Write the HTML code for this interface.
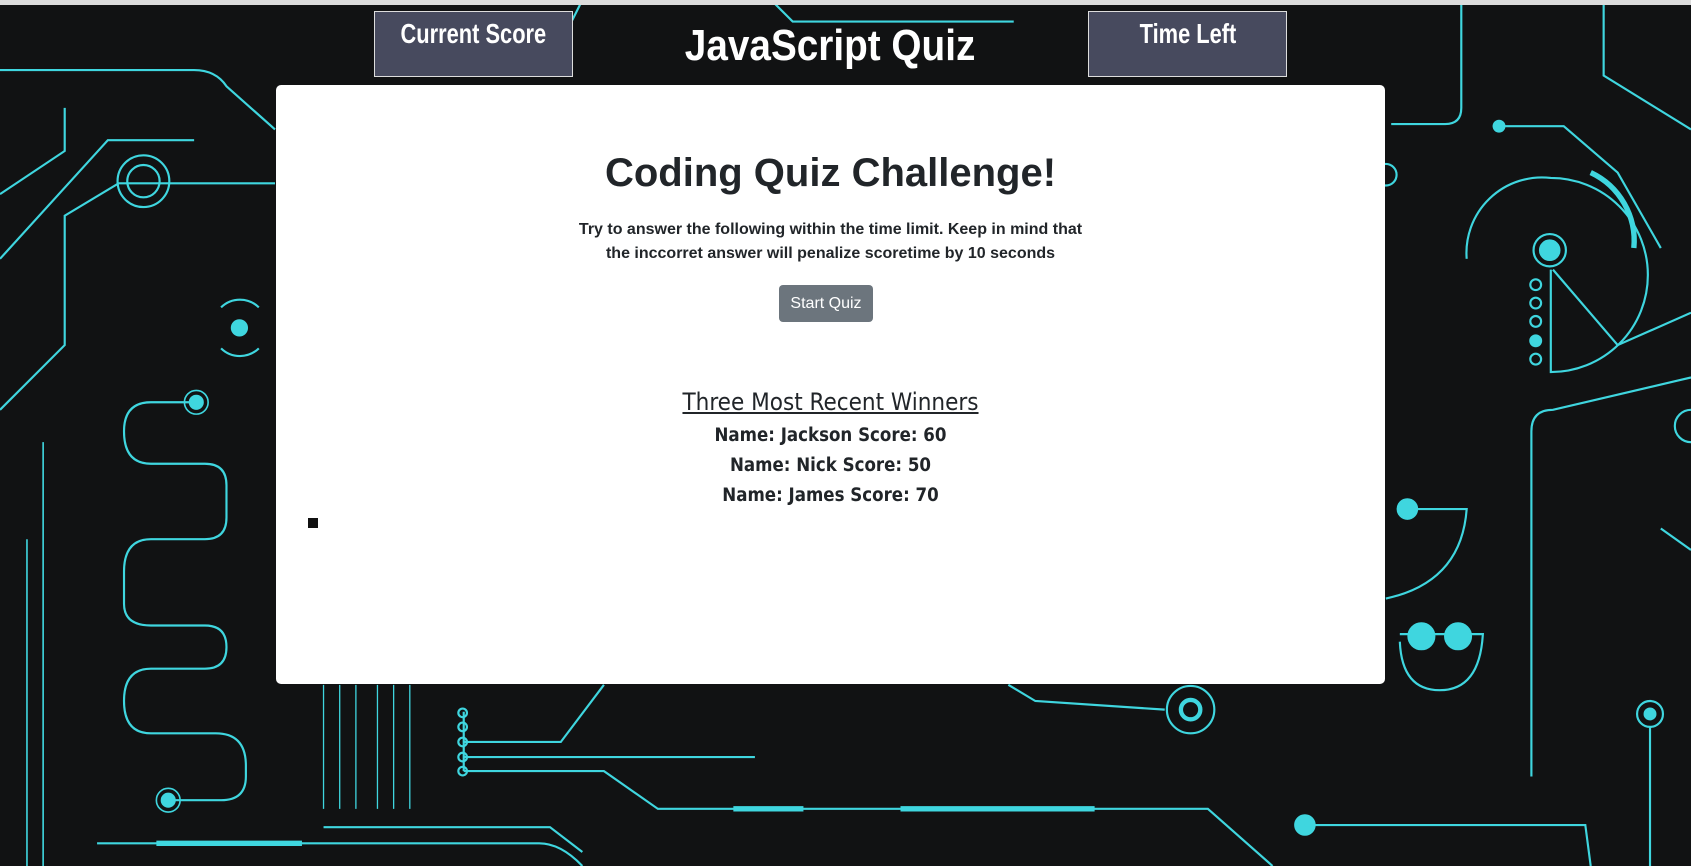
<!DOCTYPE html>
<html><head><meta charset="utf-8"><style>
html,body{margin:0;padding:0;width:1691px;height:866px;overflow:hidden;background:#111213;font-family:"Liberation Sans",Arial,sans-serif}
#bg{position:absolute;left:0;top:0}
.top{position:absolute;left:0;top:0;width:1691px;height:5px;background:#dcdcdc}
.box{position:absolute;top:11px;width:197px;height:64px;background:#474a5e;border:1px solid #ddd;color:#fff;font-weight:bold;font-size:28px;text-align:center;line-height:44px}
.box span,.title span{display:inline-block;transform:scaleX(.78)}
.title span{transform:scaleX(.88)}
.title{position:absolute;left:580px;width:500px;top:21px;text-align:center;color:#fff;font-weight:bold;font-size:44px;line-height:50px}
.card{position:absolute;left:276px;top:85px;width:1109px;height:599px;background:#fff;border-radius:5px;text-align:center;color:#212529}
h1{margin:0;position:absolute;left:0;right:0;font-size:40px;line-height:50px}
.p{position:absolute;top:133px;left:0;right:0;font-size:16px;font-weight:bold;line-height:24px}
.btn{position:absolute;left:503px;top:200px;width:94px;height:37px;background:#6c757d;color:#fff;border-radius:4px;font-size:16px;line-height:37px}
.h3{position:absolute;top:302px;left:0;right:0;font-size:24px;text-decoration:underline;line-height:30px;font-family:"DejaVu Sans Condensed","Liberation Sans",sans-serif}
.n{position:absolute;left:0;right:0;font-size:18.5px;font-weight:bold;line-height:26px;font-family:"DejaVu Sans Condensed","Liberation Sans",sans-serif}
.ico{position:absolute;left:32px;top:433px;width:10px;height:10px;background:#111}
</style></head><body>
<svg id="bg" width="1691" height="866" viewBox="0 0 1568 803" preserveAspectRatio="none" fill="none" stroke="#3fd6df" stroke-width="2">
<path d="M0 65 L180 65 Q200 65 210 80 L255 120"/>
<path d="M0 180 L60 140 L60 100"/>
<path d="M540 0 L520 40"/>
<path d="M715 0 L735 20 L940 20"/>
<path d="M1355 0 L1355 100 Q1355 115 1340 115 L1290 115"/>
<path d="M1487 0 L1487 70 L1568 120"/>
<path d="M1440 250 L1500 320 L1568 290"/>
<path d="M1420 720 L1420 400 Q1420 380 1440 380 L1568 350"/>
<path d="M0 380 L60 320 L60 200 L110 170 L255 170"/>
<path d="M0 240 L100 130 L180 130"/>
<path d="M40 410 L40 803" stroke-width="1.5"/>
<path d="M25 500 L25 803" stroke-width="1.5"/>
<path d="M180 373 L140 373 Q115 373 115 400 Q115 430 140 430 L190 430 Q210 430 210 450 L210 480 Q210 500 190 500 L140 500 Q115 500 115 530 L115 560 Q115 580 140 580 L190 580 Q210 580 210 600 Q210 620 190 620 L140 620 Q115 620 115 650 Q115 680 140 680 L200 680 Q228 680 228 710 L228 720 Q228 742 205 742 L160 742"/>
<circle cx="182" cy="373" r="6" fill="#3fd6df"/><circle cx="182" cy="373" r="11" stroke-width="1.5"/>
<circle cx="156" cy="742" r="6" fill="#3fd6df"/><circle cx="156" cy="742" r="11" stroke-width="1.5"/>
<circle cx="222" cy="304" r="7" fill="#3fd6df"/>
<path d="M205 285 A25 25 0 0 1 240 285 M205 323 A25 25 0 0 0 240 323"/>
<circle cx="133" cy="168" r="15"/><circle cx="133" cy="168" r="24"/>
<path d="M300 635 L300 750 M315 635 L315 750 M330 635 L330 750 M350 635 L350 750 M365 635 L365 750 M380 635 L380 750" stroke-width="1.2"/>
<path d="M430 660 L430 715 M430 688 L520 688 L560 635 M430 702 L700 702 M430 715 L560 715 L610 750 L1120 750 L1180 803"/>
<circle cx="429" cy="661" r="4"/><circle cx="429" cy="674" r="4"/><circle cx="429" cy="688" r="4"/><circle cx="429" cy="702" r="4"/><circle cx="429" cy="715" r="4"/>
<path d="M680 750 L745 750 M835 750 L1015 750" stroke-width="5"/>
<path d="M90 782 L500 782 Q520 782 540 803 M300 767 L510 767 L540 790"/>
<path d="M145 782 L280 782" stroke-width="5"/>
<path d="M935 635 L960 650 L1080 658"/>
<circle cx="1104" cy="658" r="22"/><circle cx="1104" cy="658" r="9" stroke-width="4"/>
<circle cx="1210" cy="765" r="9" fill="#3fd6df"/><path d="M1210 765 L1470 765 L1475 803 M1310 765 L1365 765" />
<circle cx="1530" cy="662" r="12"/><circle cx="1530" cy="662" r="5" fill="#3fd6df"/><path d="M1530 674 L1530 803"/>
<path d="M1438 250 L1438 345 A90 90 0 0 0 1438 165 A70 70 0 0 0 1360 240"/>
<path d="M1475 160 A70 70 0 0 1 1515 230" stroke-width="5"/>
<circle cx="1437" cy="232" r="9" fill="#3fd6df"/><circle cx="1437" cy="232" r="15"/>
<circle cx="1424" cy="264" r="5"/><circle cx="1424" cy="281" r="5"/><circle cx="1424" cy="298" r="5"/><circle cx="1424" cy="316" r="5" fill="#3fd6df"/><circle cx="1424" cy="333" r="5"/>
<circle cx="1390" cy="117" r="5" fill="#3fd6df"/><path d="M1390 117 L1450 117 L1500 160 L1540 230"/>
<circle cx="1305" cy="472" r="9" fill="#3fd6df"/><path d="M1305 472 L1360 472 Q1355 540 1285 555"/>
<path d="M1298 588 L1375 588 Q1372 640 1335 640 Q1300 640 1298 595"/>
<circle cx="1318" cy="590" r="12" fill="#3fd6df"/><circle cx="1352" cy="590" r="12" fill="#3fd6df"/>
<circle cx="1285" cy="162" r="10"/>
<path d="M1568 380 A15 15 0 0 0 1568 410"/>
<path d="M1540 490 L1568 510"/>
</svg>
<div class="top"></div>
<div class="box" style="left:374px"><span>Current Score</span></div>
<div class="box" style="left:1088px"><span>Time Left</span></div>
<div class="title"><span>JavaScript Quiz</span></div>
<div class="card">
<h1 style="top:63px">Coding Quiz Challenge!</h1>
<div class="p">Try to answer the following within the time limit. Keep in mind that<br>the inccorret answer will penalize scoretime by 10 seconds</div>
<div class="btn">Start Quiz</div>
<div class="h3">Three Most Recent Winners</div>
<div class="n" style="top:338px">Name: Jackson Score: 60</div>
<div class="n" style="top:368px">Name: Nick Score: 50</div>
<div class="n" style="top:398px">Name: James Score: 70</div>
<div class="ico"></div>
</div>
</body></html>
